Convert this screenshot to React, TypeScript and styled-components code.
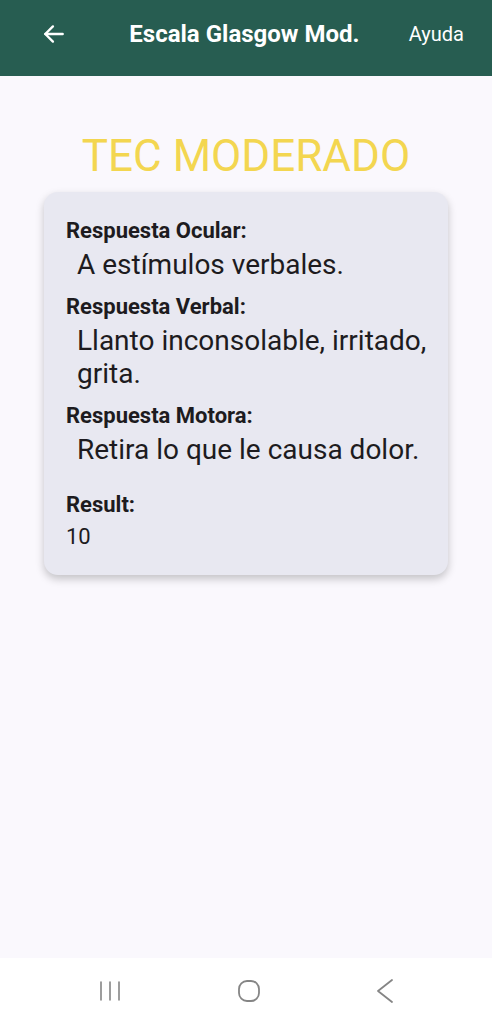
import React from "react";
import styled, {createGlobalStyle} from "styled-components";

const GlobalStyle = createGlobalStyle`
  html, body {
    margin: 0;
    padding: 0;
    background: #faf8fd;
    font-family: Roboto, "Noto Sans", "Liberation Sans", sans-serif;
  }
  * {
    box-sizing: border-box;
  }
`;

const Screen = styled.div`
  width: 492px;
  height: 1024px;
  display: flex;
  flex-direction: column;
  background: #faf8fd;
`;

const TopBar = styled.header`
  height: 76px;
  background: #275d51;
  display: flex;
  align-items: center;
  padding: 0 28px 8px 40px;
  color: #ffffff;
`;

const BackButton = styled.button`
  width: 28px;
  height: 28px;
  padding: 0;
  border: none;
  background: none;
  color: #ffffff;
  display: flex;
  align-items: center;
  justify-content: center;
`;

const BarTitle = styled.h1`
  flex: 1;
  margin: 0;
  text-align: center;
  font-size: 24px;
  font-weight: 700;
  padding-left: 12px;
  white-space: nowrap;
`;

const HelpLink = styled.span`
  font-size: 20px;
  font-weight: 400;
`;

const Content = styled.main`
  flex: 1;
  display: flex;
  flex-direction: column;
  align-items: center;
  padding: 56px 44px 0;
`;

const Severity = styled.h2`
  margin: 0 0 12px;
  font-size: 44px;
  line-height: 48px;
  font-weight: 400;
  color: #f3d650;
`;

const Card = styled.section`
  width: 100%;
  background: #e8e8f1;
  border-radius: 14px;
  box-shadow: 0 4px 8px rgba(0, 0, 0, 0.22);
  padding: 26px 12px 25px 22px;
  color: #1d1b20;
`;

const Field = styled.div<{ $gap?: number }>`
  margin-bottom: ${(p) => p.$gap ?? 13}px;
`;

const Label = styled.div`
  font-size: 22px;
  line-height: 26px;
  font-weight: 700;
`;

const Value = styled.div<{ $small?: boolean }>`
  margin-top: ${(p) => (p.$small ? 6 : 4)}px;
  padding-left: ${(p) => (p.$small ? 0 : 11)}px;
  font-size: ${(p) => (p.$small ? 22 : 28)}px;
  line-height: ${(p) => (p.$small ? 26 : 33)}px;
  font-weight: 400;
`;

const NavBar = styled.nav`
  height: 66px;
  background: #ffffff;
  display: flex;
  align-items: center;
  gap: 113px;
  padding-left: 97px;
  color: #858585;
`;

const fields = [
    {label: "Respuesta Ocular:", value: "A estímulos verbales."},
    {label: "Respuesta Verbal:", value: "Llanto inconsolable, irritado, grita."},
    {label: "Respuesta Motora:", value: "Retira lo que le causa dolor."},
];

function App() {
    return (
        <Screen>
            <GlobalStyle/>
            <TopBar>
                <BackButton aria-label="Volver">
                    <svg width="26" height="26" viewBox="0 0 24 24" fill="none" stroke="currentColor"
                         strokeWidth="2.2" strokeLinecap="round" strokeLinejoin="round">
                        <path d="M20 12H4"/>
                        <path d="M11 5l-7 7 7 7"/>
                    </svg>
                </BackButton>
                <BarTitle>Escala Glasgow Mod.</BarTitle>
                <HelpLink>Ayuda</HelpLink>
            </TopBar>
            <Content>
                <Severity>TEC MODERADO</Severity>
                <Card>
                    {fields.map((f, i) => (
                        <Field key={f.label} $gap={i === fields.length - 1 ? 26 : 13}>
                            <Label>{f.label}</Label>
                            <Value>{f.value}</Value>
                        </Field>
                    ))}
                    <Field $gap={0}>
                        <Label>Result:</Label>
                        <Value $small>10</Value>
                    </Field>
                </Card>
            </Content>
            <NavBar>
                <svg width="26" height="24" viewBox="0 0 26 24" stroke="currentColor" strokeWidth="1.6"
                     strokeLinecap="round">
                    <path d="M4 3v18M13 3v18M22 3v18"/>
                </svg>
                <svg width="26" height="26" viewBox="0 0 26 26" fill="none" stroke="currentColor"
                     strokeWidth="1.8">
                    <rect x="3" y="3" width="20" height="20" rx="8"/>
                </svg>
                <svg width="20" height="26" viewBox="0 0 20 26" fill="none" stroke="currentColor"
                     strokeWidth="1.8" strokeLinecap="round" strokeLinejoin="round">
                    <path d="M17 2L3 13l14 11"/>
                </svg>
            </NavBar>
        </Screen>
    );
}

export default App;
